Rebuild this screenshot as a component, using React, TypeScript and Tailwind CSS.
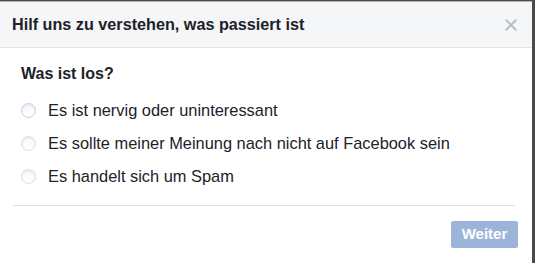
import React, { useState } from 'react';

const OPTIONS = [
  'Es ist nervig oder uninteressant',
  'Es sollte meiner Meinung nach nicht auf Facebook sein',
  'Es handelt sich um Spam',
];

export default function App() {
  const [choice, setChoice] = useState<number | null>(null);

  return (
    <div
      className="w-[535px] h-[263px] overflow-hidden bg-[#4a4a4a] pt-px"
      style={{ fontFamily: '"Liberation Sans", Arial, sans-serif' }}
    >
      <div className="w-[532px] h-[280px] bg-white border-t border-[#b5b5b5] flex flex-col">
        <div className="h-[46px] bg-[#f5f6f7] border-b border-[#e5e5e5] flex items-center justify-between pl-3 pr-[13px]">
          <span className="text-[16.2px] font-bold text-[#1d2129]">Hilf uns zu verstehen, was passiert ist</span>
          <button className="text-[#bcc0c4] w-4 h-4 flex items-center justify-center" aria-label="Schließen">
            <svg width="12" height="12" viewBox="0 0 12 12">
              <path d="M1.5 1.5 L10.5 10.5 M10.5 1.5 L1.5 10.5" stroke="currentColor" strokeWidth="2.2" strokeLinecap="square" />
            </svg>
          </button>
        </div>

        <div className="px-[13px] pt-[16px]">
          <div className="pl-[8px] text-[16px] font-bold text-[#1d2129] leading-[20px]">Was ist los?</div>
          <div className="mt-[10px] flex flex-col pl-[8px]">
            {OPTIONS.map((o, i) => (
              <label
                key={o}
                className="h-[33px] flex items-center gap-[12px] cursor-pointer"
                onClick={() => setChoice(i)}
              >
                <span
                  className={`w-[15px] h-[15px] rounded-full border bg-gradient-to-b from-[#f6f7f9] to-white shadow-[inset_0_1px_2px_rgba(0,0,0,0.08)] ${
                    i === 0 ? 'border-[#c6cce8]' : 'border-[#dcdee3]'
                  } ${choice === i ? 'bg-[#4267b2]' : ''}`}
                />
                <span className="text-[16.4px] text-[#1d2129]">{o}</span>
              </label>
            ))}
          </div>
          <div className="mt-[12px] mr-[4px] border-t border-[#dddfe2]" />
          <div className="flex justify-end pt-[15px] pr-[1px]">
            <button
              disabled
              className="h-[27px] w-[67px] rounded-[2px] bg-[#9cb4d8] border border-[#9cb4d8] text-white text-[15px] font-bold"
            >
              Weiter
            </button>
          </div>
        </div>
      </div>
    </div>
  );
}
